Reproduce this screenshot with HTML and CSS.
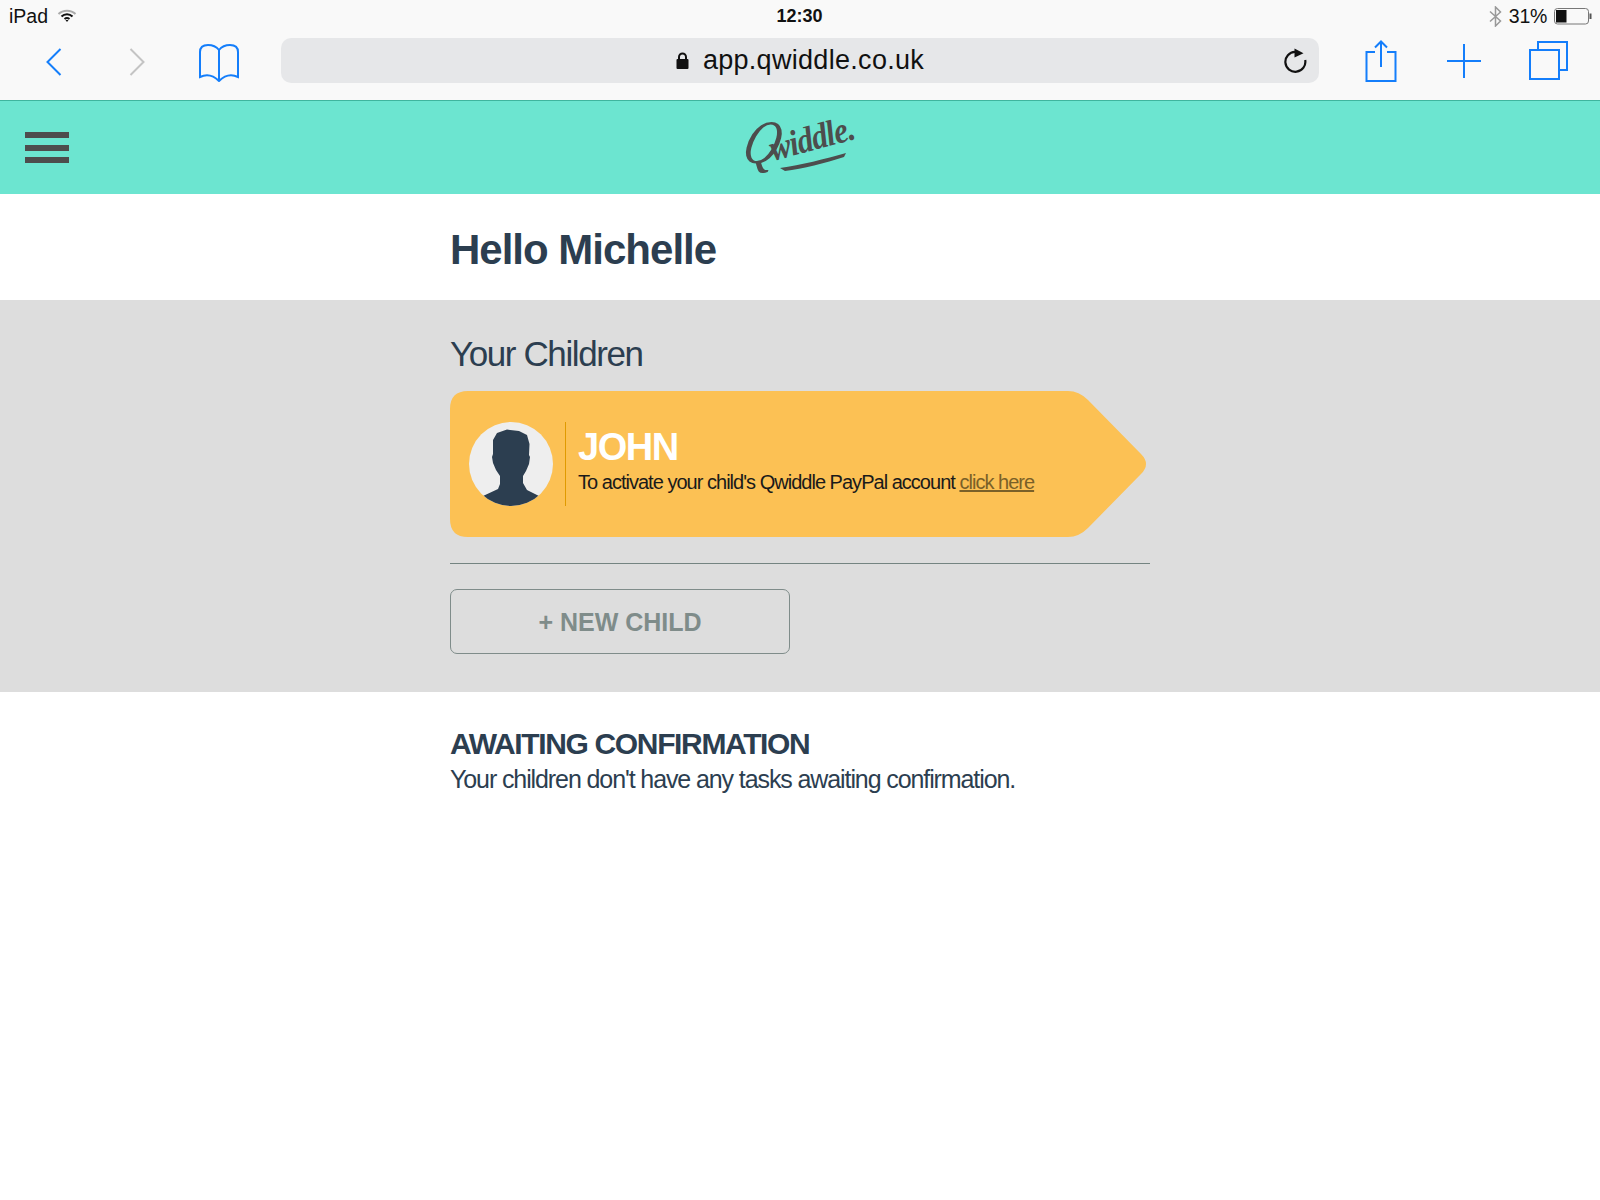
FILE: index.html
```html
<!DOCTYPE html>
<html lang="en">
<head>
  <meta charset="UTF-8">
  <title>Qwiddle</title>
  <link rel="stylesheet" href="styles.css">
</head>
<body>
<div class="browser">
  <div class="status-bar">
    <div class="status-left">
      <span>iPad</span>
      <svg width="20" height="14" viewBox="0 0 20 14">
        <path d="M1.5 5 C6 0.5 14 0.5 18.500 5" class="wifi-off"/>
        <path d="M4.500 7.500 C7.500 4.500 12.500 4.500 15.500 7.500" class="wifi-on"/>
        <path d="M7.500 10 C9 8.800 11 8.800 12.500 10" class="wifi-on"/>
        <path d="M8.500 11 L10 13 L11.500 11 Z" fill="#111"/>
      </svg>
    </div>
    <div class="status-time">12:30</div>
    <div class="status-right">
      <svg width="13" height="21" viewBox="0 0 13 21">
        <path d="M1 5.500 L11.500 15 L6.500 20 V1 L11.500 6 L1 15.500" class="bt"/>
      </svg>
      <span>31%</span>
      <svg width="38" height="17" viewBox="0 0 38 17">
        <rect x="0.500" y="0.500" width="34" height="15.500" rx="3" class="batt"/>
        <rect x="2" y="2" width="10.500" height="12.500" fill="#111"/>
        <rect x="35.500" y="5.500" width="2" height="5.500" fill="#555"/>
      </svg>
    </div>
  </div>

  <div class="toolbar">
    <div class="tool">
      <svg class="nudge-down" width="16" height="28" viewBox="0 0 16 28"><path d="M14.500 1 L1.500 14 L14.500 27" class="line"/></svg>
    </div>
    <div class="tool">
      <svg class="nudge-down" width="16" height="28" viewBox="0 0 16 28"><path d="M1.500 1 L14.500 14 L1.500 27" class="line line-off"/></svg>
    </div>
    <div class="tool">
      <svg class="book" width="40" height="38" viewBox="0 0 40 38">
        <path d="M1 33 V8 Q1 1 9 1 Q16 1 20 6 Q24 1 31 1 Q39 1 39 8 V33 Q29 28 20 37 Q11 28 1 33 Z M20 6 V37" class="line"/>
      </svg>
    </div>
    <div class="url-bar">
      <svg width="13" height="17" viewBox="0 0 13 17">
        <path d="M3 8 V5 A3.500 3.500 0 0 1 10 5 V8" class="lock"/>
        <rect x="0.500" y="7" width="12" height="10" rx="1" fill="#111"/>
      </svg>
      <span>app.qwiddle.co.uk</span>
      <svg class="reload" width="24" height="26" viewBox="0 0 24 26">
        <path d="M21.200 13 A10 10 0 1 1 11 4.800" class="reload-arc"/>
        <path d="M10.500 1.500 L19.500 6.300 L10.500 10.500 Z" fill="#111"/>
      </svg>
    </div>
    <div class="tool">
      <svg width="32" height="42" viewBox="0 0 32 42">
        <path d="M10 12 H1.500 V41 H30.500 V12 H22" class="line"/>
        <path d="M16 27 V1.500 M10 7.500 L16 1.500 L22 7.500" class="line"/>
      </svg>
    </div>
    <div class="tool">
      <svg width="34" height="34" viewBox="0 0 34 34"><path d="M17 0 V34 M0 17 H34" class="line"/></svg>
    </div>
    <div class="tool">
      <svg class="tabs" width="40" height="40" viewBox="0 0 40 40">
        <rect x="1" y="9" width="29" height="29" class="line"/>
        <path d="M9 9 V1 H38 V29 H30" class="line"/>
      </svg>
    </div>
  </div>
</div>

<header class="site-header">
  <div class="hamburger"><span></span><span></span><span></span></div>
  <svg class="logo" width="132" height="93" viewBox="-7 -20 132 93">
    <text class="logo-q" transform="translate(-1 42) skewX(-14) scale(.8 1)">Q</text>
    <text class="logo-text" transform="translate(32 40) rotate(-15) scale(.88 1)">widdle.</text>
    <path d="M39 47 C60 44 84 38 105 32 L103 36 C84 42 62 48 44 50 Z" fill="#4d4d4d"/>
  </svg>
  <div></div>
</header>

<section class="hello">
  <div class="wrap">
    <h1>Hello Michelle</h1>
  </div>
</section>

<section class="children">
  <div class="wrap">
    <h2>Your Children</h2>
    <div class="child-card">
      <div class="avatar">
        <svg width="84" height="84" viewBox="0 0 84 84">
          <path d="M38 7.500 L50 9 L58 13 L60.500 22 L60 33 L61 35 L60 42 L57 49 L54 54 L54 61 L58 68 L70 74 L70 84 L14 84 L14 74 L29 67 L31 62 L31 54 L27 48 L24 41 L23 35 L24 32 L24 18 L28 11 Z" fill="#2c3e50"/>
        </svg>
      </div>
      <div class="child-info">
        <div class="child-name">JOHN</div>
        <p>To activate your child's Qwiddle PayPal account <a href="#">click here</a></p>
      </div>
    </div>
    <hr>
    <button class="new-child">+ NEW CHILD</button>
  </div>
</section>

<section class="awaiting">
  <div class="wrap">
    <h3>AWAITING CONFIRMATION</h3>
    <p>Your children don't have any tasks awaiting confirmation.</p>
  </div>
</section>
</body>
</html>
```

FILE: styles.css
```css
html, body {
  margin: 0;
  background: #fff;
}
body {
  font-family: "Liberation Sans", Arial, sans-serif;
  color: #2c3e50;
}

/* safari chrome */
.browser {
  height: 100px;
  background: #f9f9f9;
  border-bottom: 1px solid #3fb59e;
  color: #111;
}
.status-bar {
  height: 32px;
  display: grid;
  grid-template-columns: 1fr auto 1fr;
  align-items: center;
  padding: 0 8px 0 9px;
  font-size: 19.500px;
}
.status-left {
  display: flex;
  align-items: center;
  gap: 9px;
}
.status-time {
  font-weight: bold;
  font-size: 18px;
  margin-right: 2px;
}
.status-right {
  display: flex;
  align-items: center;
  justify-content: flex-end;
  gap: 7px;
}
.status-right span {
  letter-spacing: -.3px;
}
.wifi-off, .wifi-on, .bt, .batt, .lock, .reload-arc {
  fill: none;
}
.wifi-off {
  stroke: #aaa;
  stroke-width: 2;
}
.wifi-on {
  stroke: #111;
  stroke-width: 2;
}
.bt {
  stroke: #999;
  stroke-width: 1.500;
}
.batt {
  stroke: #777;
}
.lock {
  stroke: #111;
  stroke-width: 2;
}
.reload-arc {
  stroke: #111;
  stroke-width: 2.200;
}
.toolbar {
  height: 68px;
  display: flex;
  padding: 0 8px 0 12px;
  align-items: flex-start;
}
.tool {
  flex: 0 0 83px;
  height: 45px;
  margin-top: 6px;
  display: flex;
  align-items: center;
  justify-content: center;
}
.nudge-down {
  margin-top: 2px;
}
.book {
  margin: 4px 2px 0 0;
}
.tabs {
  margin-left: 4px;
}
.line {
  fill: none;
  stroke: #147efb;
  stroke-width: 2;
}
.line-off {
  stroke: #c4c4c4;
}
.url-bar {
  position: relative;
  flex: 0 0 1038px;
  height: 45px;
  margin: 6px 20px 0 20px;
  background: #e6e7e9;
  border-radius: 10px;
  display: flex;
  align-items: center;
  justify-content: center;
  gap: 14px;
  font-size: 27px;
  letter-spacing: .3px;
}
.reload {
  position: absolute;
  right: 11px;
  top: 9px;
}

/* site header */
.site-header {
  height: 93px;
  padding: 0 25px;
  background: #6ce5d0;
  display: grid;
  grid-template-columns: 1fr auto 1fr;
  align-items: center;
}
.hamburger {
  width: 44px;
  display: flex;
  flex-direction: column;
  gap: 6.500px;
}
.hamburger span {
  height: 6px;
  background: #4d4d4d;
}
.logo {
  display: block;
}
.logo-q {
  font-family: "Liberation Serif", serif;
  font-style: italic;
  font-size: 62px;
  fill: #4d4d4d;
}
.logo-text {
  font-family: "Liberation Serif", serif;
  font-style: italic;
  font-weight: bold;
  font-size: 36px;
  letter-spacing: -1px;
  fill: #4d4d4d;
}

/* page */
.wrap {
  width: 700px;
  margin: 0 auto;
}
.hello {
  height: 106px;
  box-sizing: border-box;
  padding-top: 31px;
}
.hello h1 {
  margin: 0;
  font-size: 42px;
  line-height: 50px;
  letter-spacing: -1px;
}
.children {
  background: #ddd;
  padding: 32px 0 38px;
}
.children h2 {
  margin: 0 0 15px;
  font-weight: normal;
  font-size: 35px;
  line-height: 44px;
  letter-spacing: -1.400px;
}
.child-card {
  width: 697px;
  height: 146px;
  box-sizing: border-box;
  background: #fcc154;
  clip-path: path("M18 0 H618 Q629 0 638 9 L691 63 Q701 73 691 83 L638 137 Q629 146 618 146 H18 Q0 146 0 128 V18 Q0 0 18 0 Z");
  display: flex;
  align-items: center;
  padding-left: 19px;
}
.avatar {
  width: 84px;
  height: 84px;
  border-radius: 50%;
  overflow: hidden;
  background: #eee;
}
.avatar svg {
  display: block;
}
.child-info {
  margin-left: 12px;
  height: 84px;
  border-left: 1px solid #e09a00;
  padding-left: 12px;
}
.child-name {
  font-size: 38px;
  line-height: 46px;
  font-weight: bold;
  color: #fff;
  letter-spacing: -1.500px;
  margin-top: 2px;
}
.child-info p {
  margin: 0;
  font-size: 20px;
  line-height: 25px;
  letter-spacing: -.98px;
  color: #1a1a1a;
}
.child-info a {
  color: #7a6028;
}
.children hr {
  margin: 26px 0 25px;
  border: 0;
  border-top: 1px solid #748481;
}
.new-child {
  display: block;
  width: 340px;
  height: 65px;
  padding: 2px 0 0;
  background: transparent;
  border: 1px solid #7f8c8a;
  border-radius: 7px;
  font-family: inherit;
  font-size: 25px;
  font-weight: bold;
  color: #7f8c8a;
}
.awaiting {
  padding-top: 34px;
}
.awaiting h3 {
  margin: 0;
  font-size: 30px;
  line-height: 36px;
  letter-spacing: -1.350px;
}
.awaiting p {
  margin: 0;
  font-size: 25px;
  line-height: 34px;
  letter-spacing: -1.100px;
}
```
